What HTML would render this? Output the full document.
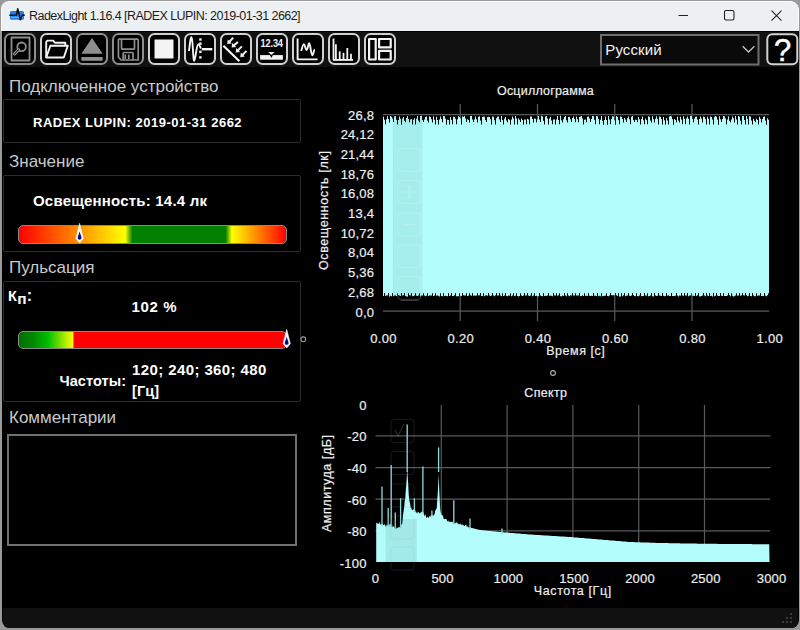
<!DOCTYPE html><html><head><meta charset="utf-8"><style>
html,body{margin:0;padding:0;width:800px;height:630px;overflow:hidden;background:#9a9a9a;}
.t{position:absolute;white-space:pre;line-height:1;font-family:"Liberation Sans",sans-serif;}
.a{position:absolute;box-sizing:border-box;}
svg{position:absolute;left:0;top:0;}
</style></head><body>

<div class="a" style="left:2px;top:1px;width:796.5px;height:627px;border-radius:8px;background:#000;overflow:hidden;"></div>
<div class="a" style="left:1px;top:1px;width:797.5px;height:30px;border-radius:8px 8px 0 0;background:#edf0f2;border-top:1px solid #fbfbfb;border-left:1px solid #fafafa;border-right:1px solid #fafafa;"></div>
<div class="a" style="left:2.5px;top:607.5px;width:795px;height:20px;border-radius:0 0 6px 6px;background:#111111;"></div>
<div class="t" style="left:29.00px;top:9.62px;font-size:12.5px;font-weight:400;color:#1c1c1c;letter-spacing:-0.55px;">RadexLight 1.16.4 [RADEX LUPIN: 2019-01-31 2662]</div>
<svg width="800" height="630" viewBox="0 0 800 630">
<rect x="10" y="10.9" width="14" height="8.8" rx="1.5" fill="#1f7ff0"/>
<path d="M11 17.3 L23 17.3" stroke="#8cc0ff" stroke-width="0.9"/>
<path d="M9.3 15.2 L16.4 15 L17.7 8.8 L20.4 19.8 L22.3 15 L24.8 15.2" fill="none" stroke="#111" stroke-width="1.5" stroke-linejoin="round"/>
<line x1="678.5" y1="15.5" x2="688" y2="15.5" stroke="#222" stroke-width="1"/>
<rect x="724.5" y="10.5" width="9.5" height="9.5" rx="1.5" fill="none" stroke="#222" stroke-width="1.1"/>
<path d="M771.5 10.7 L781.5 20.7 M781.5 10.7 L771.5 20.7" stroke="#222" stroke-width="1.1"/>
<rect x="790.25" y="613.25" width="1.5" height="1.5" fill="#5a5a5a"/>
<rect x="786.25" y="617.25" width="1.5" height="1.5" fill="#5a5a5a"/>
<rect x="790.25" y="617.25" width="1.5" height="1.5" fill="#5a5a5a"/>
<rect x="782.25" y="621.25" width="1.5" height="1.5" fill="#5a5a5a"/>
<rect x="786.25" y="621.25" width="1.5" height="1.5" fill="#5a5a5a"/>
<rect x="790.25" y="621.25" width="1.5" height="1.5" fill="#5a5a5a"/>
</svg>
<div class="a" style="left:2.5px;top:32px;width:795px;height:34.5px;background:#111111;"></div>
<svg width="800" height="630" viewBox="0 0 800 630">
<rect x="4.5" y="33.5" width="31" height="31" rx="6" fill="none" stroke="#000" stroke-width="1"/>
<rect x="5" y="34" width="30" height="30" rx="5.5" fill="#000" stroke="#8e8e8e" stroke-width="2"/>
<g transform="translate(4,33)" fill="none" stroke="#8e8e8e" stroke-width="1.8" stroke-linejoin="round"><rect x="7.5" y="4.5" width="18" height="23"/><circle cx="17.6" cy="13.8" r="4.3"/><path d="M14.6 16.8 L10.6 20.8" stroke-width="3.2" stroke-linecap="round"/><path d="M14.6 16.8 L10.6 20.8" stroke="#000" stroke-width="1" stroke-linecap="round"/></g>
<rect x="40.5" y="33.5" width="31" height="31" rx="6" fill="none" stroke="#000" stroke-width="1"/>
<rect x="41" y="34" width="30" height="30" rx="5.5" fill="#000" stroke="#cfcfcf" stroke-width="2"/>
<g transform="translate(40,33)" fill="none" stroke="#f4f4f4" stroke-width="1.8" stroke-linejoin="round"><path d="M6.2 24.5 L6.2 9 L7.4 7.6 L13.2 7.6 L14.8 9.8 L25.3 9.8 L25.3 12.8" stroke-width="1.9"/><path d="M10.4 12.8 L27.8 12.8 L23.8 24.5 L6.2 24.5 Z" stroke-width="1.9"/></g>
<rect x="76.5" y="33.5" width="31" height="31" rx="6" fill="none" stroke="#000" stroke-width="1"/>
<rect x="77" y="34" width="30" height="30" rx="5.5" fill="#000" stroke="#8e8e8e" stroke-width="2"/>
<g transform="translate(76,33)" fill="none" stroke="#8e8e8e" stroke-width="1.8" stroke-linejoin="round"><path d="M16 5 L26.6 20.8 L5.4 20.8 Z" fill="#8e8e8e" stroke="none"/><rect x="5.4" y="24" width="21.2" height="3.8" fill="#8e8e8e" stroke="none"/></g>
<rect x="112.5" y="33.5" width="31" height="31" rx="6" fill="none" stroke="#000" stroke-width="1"/>
<rect x="113" y="34" width="30" height="30" rx="5.5" fill="#000" stroke="#8e8e8e" stroke-width="2"/>
<g transform="translate(112,33)" fill="none" stroke="#8e8e8e" stroke-width="1.8" stroke-linejoin="round"><path d="M7.4 6.2 L25.2 6.2 Q26.2 6.2 26.2 7.2 L26.2 27 L9 27 L6.4 24 L6.4 7.2 Q6.4 6.2 7.4 6.2 Z" stroke-width="1.7"/><path d="M9.5 6.5 L9.5 15.2 Q9.5 16.2 10.5 16.2 L21.5 16.2 Q22.5 16.2 22.5 15.2 L22.5 6.5" stroke-width="1.7"/><path d="M11.2 27 L11.2 20.3 Q11.2 19.5 12 19.5 L20.3 19.5 Q21 19.5 21 20.3 L21 27" stroke-width="1.7"/><path d="M13.3 21.6 L13.3 26 M16.8 21.6 L16.8 26" stroke-width="1.7"/></g>
<rect x="148.5" y="33.5" width="31" height="31" rx="6" fill="none" stroke="#000" stroke-width="1"/>
<rect x="149" y="34" width="30" height="30" rx="5.5" fill="#000" stroke="#cfcfcf" stroke-width="2"/>
<g transform="translate(148,33)" fill="none" stroke="#f4f4f4" stroke-width="1.8" stroke-linejoin="round"><rect x="10.5" y="6.5" width="19" height="19" fill="#f4f4f4" stroke="none" transform="translate(-4,0)"/></g>
<rect x="184.5" y="33.5" width="31" height="31" rx="6" fill="none" stroke="#000" stroke-width="1"/>
<rect x="185" y="34" width="30" height="30" rx="5.5" fill="#000" stroke="#cfcfcf" stroke-width="2"/>
<g transform="translate(184,33)" fill="none" stroke="#f4f4f4" stroke-width="1.8" stroke-linejoin="round"><path d="M5 18 C6 10 6.6 4 7.6 4.2 C8.8 4.4 9 28 10.2 27.8 C11.4 27.6 12.6 11 14.3 11.2 C15.6 11.4 16.2 14.5 17 15.5" stroke-width="1.9"/><rect x="15.2" y="5.3" width="2.4" height="2.4" fill="#f4f4f4" stroke="none"/><rect x="15.2" y="9.4" width="2.4" height="2.4" fill="#f4f4f4" stroke="none"/><rect x="15.2" y="17.6" width="2.4" height="2.4" fill="#f4f4f4" stroke="none"/><rect x="15.2" y="23.2" width="2.4" height="2.4" fill="#f4f4f4" stroke="none"/><path d="M17.8 16.2 L28.3 16.2" stroke-width="2.4"/></g>
<rect x="220.5" y="33.5" width="31" height="31" rx="6" fill="none" stroke="#000" stroke-width="1"/>
<rect x="221" y="34" width="30" height="30" rx="5.5" fill="#000" stroke="#cfcfcf" stroke-width="2"/>
<g transform="translate(220,33)" fill="none" stroke="#f4f4f4" stroke-width="1.8" stroke-linejoin="round"><path d="M3.4 12.8 L19.4 28.3" stroke-width="2.2"/><path d="M13.2 4.6 L8.7 9.5" stroke-width="2"/><path d="M7.2 11 L11.8 10.4 L7.8 6.4 Z" fill="#f4f4f4" stroke="none"/><path d="M17.9 8.9 L13.1 13.1" stroke-width="2"/><path d="M11.6 14.6 L16.2 14.0 L12.2 10.0 Z" fill="#f4f4f4" stroke="none"/><path d="M21.9 13.4 L17.1 18.1" stroke-width="2"/><path d="M15.6 19.6 L20.2 19.0 L16.2 15.000000000000002 Z" fill="#f4f4f4" stroke="none"/><path d="M26.5 17.9 L21.7 22.7" stroke-width="2"/><path d="M20.2 24.2 L24.799999999999997 23.599999999999998 L20.8 19.6 Z" fill="#f4f4f4" stroke="none"/></g>
<rect x="256.5" y="33.5" width="31" height="31" rx="6" fill="none" stroke="#000" stroke-width="1"/>
<rect x="257" y="34" width="30" height="30" rx="5.5" fill="#000" stroke="#cfcfcf" stroke-width="2"/>
<g transform="translate(256,33)" fill="none" stroke="#f4f4f4" stroke-width="1.8" stroke-linejoin="round"><text x="15.7" y="13" font-family="Liberation Sans" font-weight="700" font-size="9.6" fill="#f4f4f4" stroke="none" text-anchor="middle" letter-spacing="-0.15" transform="translate(15.7 0) scale(0.96 1.05) translate(-15.7 0)">12.34</text><rect x="4.1" y="22.1" width="22.8" height="4.6" fill="#f4f4f4" stroke="none"/><path d="M12.2 19 L18.6 19 L15.4 22 Z" fill="#f4f4f4" stroke="none"/><path d="M13.9 22.1 L16.9 22.1 L15.4 24.9 Z" fill="#000" stroke="none"/></g>
<rect x="292.5" y="33.5" width="31" height="31" rx="6" fill="none" stroke="#000" stroke-width="1"/>
<rect x="293" y="34" width="30" height="30" rx="5.5" fill="#000" stroke="#cfcfcf" stroke-width="2"/>
<g transform="translate(292,33)" fill="none" stroke="#f4f4f4" stroke-width="1.8" stroke-linejoin="round"><path d="M5.6 5.5 L5.6 26.4 L25.6 26.4" stroke-width="1.9"/><path d="M9.2 18 C10.2 14 11 11 11.9 11.2 C13 11.4 13.4 17 14.6 17 C15.8 17 16.2 10.2 17.2 10.3 C18.4 10.4 19 22.2 20.3 22.2 C21.4 22.2 21.8 16.8 22.8 16.5" stroke-width="1.9"/></g>
<rect x="328.5" y="33.5" width="31" height="31" rx="6" fill="none" stroke="#000" stroke-width="1"/>
<rect x="329" y="34" width="30" height="30" rx="5.5" fill="#000" stroke="#cfcfcf" stroke-width="2"/>
<g transform="translate(328,33)" fill="none" stroke="#f4f4f4" stroke-width="1.8" stroke-linejoin="round"><path d="M5 26.9 L25 26.9" stroke-width="1.9"/><path d="M5.5 5.5 L5.5 26.9" stroke-width="1.8"/><path d="M7.9 11.2 L7.9 26.9" stroke-width="1.8"/><path d="M11.7 18.4 L11.7 26.9" stroke-width="1.8"/><path d="M15.5 19.8 L15.5 26.9" stroke-width="1.8"/><path d="M19.3 15 L19.3 26.9" stroke-width="1.8"/><path d="M23 20.7 L23 26.9" stroke-width="1.8"/></g>
<rect x="364.5" y="33.5" width="31" height="31" rx="6" fill="none" stroke="#000" stroke-width="1"/>
<rect x="365" y="34" width="30" height="30" rx="5.5" fill="#000" stroke="#cfcfcf" stroke-width="2"/>
<g transform="translate(364,33)" fill="none" stroke="#f4f4f4" stroke-width="1.8" stroke-linejoin="round"><rect x="5.1" y="6" width="6.6" height="20.5" stroke-width="2.2"/><rect x="15.1" y="6" width="11.6" height="8.4" stroke-width="2.2"/><rect x="15.1" y="17.9" width="11.6" height="8.6" stroke-width="2.2"/></g>
<rect x="601" y="35" width="157.5" height="29.5" fill="#0a0a0a" stroke="#6e6e6e" stroke-width="2"/>
<path d="M742.7 46.3 L748.5 52 L754.4 46.3" fill="none" stroke="#c4c4c4" stroke-width="1.3"/>
<rect x="767.3" y="34.3" width="30" height="30" rx="5" fill="#000" stroke="#d2d2d2" stroke-width="2"/>
</svg>
<div class="t" style="left:605.30px;top:42.30px;font-size:15px;font-weight:400;color:#f2f2f2;letter-spacing:0.1px;">Русский</div>
<div class="t" style="left:482.50px;width:600px;text-align:center;top:34.76px;font-size:31px;font-weight:400;color:#ffffff;letter-spacing:0px;-webkit-text-stroke:0.5px #fff;">?</div>
<div class="t" style="left:9.00px;top:77.61px;font-size:17px;font-weight:400;color:#c9c9c9;letter-spacing:0px;">Подключенное устройство</div>
<div class="t" style="left:9.00px;top:153.11px;font-size:17px;font-weight:400;color:#c9c9c9;letter-spacing:0px;">Значение</div>
<div class="t" style="left:9.00px;top:258.61px;font-size:17px;font-weight:400;color:#c9c9c9;letter-spacing:0px;">Пульсация</div>
<div class="t" style="left:9.00px;top:408.61px;font-size:17px;font-weight:400;color:#c9c9c9;letter-spacing:0px;">Комментарии</div>
<div class="a" style="left:3px;top:99px;width:298px;height:44px;border:1px solid #2c2c2c;border-radius:2px;"></div>
<div class="a" style="left:3px;top:175px;width:298px;height:77px;border:1px solid #2c2c2c;border-radius:2px;"></div>
<div class="a" style="left:3px;top:281px;width:298px;height:121px;border:1px solid #2c2c2c;border-radius:2px;"></div>
<div class="a" style="left:7px;top:433.5px;width:290px;height:112px;border:2px solid #707070;"></div>
<div class="t" style="left:33.00px;top:115.80px;font-size:13px;font-weight:700;color:#fff;letter-spacing:0.5px;">RADEX LUPIN: 2019-01-31 2662</div>
<div class="t" style="left:33.00px;top:193.10px;font-size:15px;font-weight:700;color:#fff;letter-spacing:0.2px;">Освещенность: 14.4 лк</div>
<div class="t" style="left:8.00px;top:287.73px;font-size:14.5px;font-weight:700;color:#fff;letter-spacing:0.3px;">К<span style="font-size:15.5px;position:relative;top:3.5px;">п</span><span style="font-size:16px;">:</span></div>
<div class="t" style="left:131.60px;top:298.80px;font-size:15px;font-weight:700;color:#fff;letter-spacing:0.6px;">102 %</div>
<div class="t" style="left:132.00px;top:362.00px;font-size:15px;font-weight:700;color:#fff;letter-spacing:0.4px;">120; 240; 360; 480</div>
<div class="t" style="left:132.00px;top:383.73px;font-size:14.5px;font-weight:700;color:#fff;letter-spacing:0.1px;">[Гц]</div>
<div class="t" style="left:59.40px;top:374.33px;font-size:14.5px;font-weight:700;color:#fff;letter-spacing:0.1px;">Частоты:</div>
<div class="a" style="left:17.5px;top:224.5px;width:269px;height:19px;border:1.5px solid #8a8a8a;border-radius:5px;background:linear-gradient(90deg,#ff0000 0%,#ffff00 39.8%,#008000 42.5%,#008000 77.4%,#ffff00 79.7%,#ff0000 100%);"></div>
<div class="a" style="left:17.5px;top:330.5px;width:269px;height:18px;border:1.5px solid #8a8a8a;border-radius:5px;background:linear-gradient(90deg,#006e00 0%,#008800 5.3%,#00c000 10.9%,#ffff00 20.3%,#ff0000 20.5%,#ff0000 100%);"></div>
<svg width="800" height="630" viewBox="0 0 800 630">
<path d="M79.6 223.3 L83.3 238.47 L79.6 243 L75.89999999999999 238.47 Z" fill="#ffffff" stroke="#ffffff" stroke-width="0.5" stroke-linejoin="round"/>
<path d="M79.6 231.18 C80.1 233.72 81.5 236.26 81.5 237.96 C81.5 239.35 80.39999999999999 239.65 79.6 239.65 C78.8 239.65 77.69999999999999 239.35 77.69999999999999 237.96 C77.69999999999999 236.26 79.1 233.72 79.6 231.18 Z" fill="#0a0a80"/>
<path d="M286.7 329.3 L290.4 343.70 L286.7 348 L283.0 343.70 Z" fill="#ffffff" stroke="#ffffff" stroke-width="0.5" stroke-linejoin="round"/>
<path d="M286.7 336.78 C287.2 339.19 288.59999999999997 341.60 288.59999999999997 343.21 C288.59999999999997 344.52 287.5 344.82 286.7 344.82 C285.9 344.82 284.8 344.52 284.8 343.21 C284.8 341.60 286.2 339.19 286.7 336.78 Z" fill="#0a0a80"/>
<circle cx="303.3" cy="339.3" r="2.4" fill="none" stroke="#9a9a9a" stroke-width="1.1"/>
<circle cx="553" cy="373" r="2.4" fill="none" stroke="#b0b0b0" stroke-width="1.1"/>
<line x1="460.24" y1="104" x2="460.24" y2="321" stroke="#5a5a5a" stroke-width="1.2"/>
<line x1="537.48" y1="104" x2="537.48" y2="321" stroke="#5a5a5a" stroke-width="1.2"/>
<line x1="614.72" y1="104" x2="614.72" y2="321" stroke="#5a5a5a" stroke-width="1.2"/>
<line x1="691.96" y1="104" x2="691.96" y2="321" stroke="#5a5a5a" stroke-width="1.2"/>
<line x1="383.0" y1="311.2" x2="769.2" y2="311.2" stroke="#5a5a5a" stroke-width="1.2"/>
<line x1="383.0" y1="114.6" x2="769.2" y2="114.6" stroke="#5a5a5a" stroke-width="1.2"/>
<path d="M383.0 116.8 L384.0 116.8 L384.0 119.7 L385.0 119.7 L385.0 124.3 L386.0 124.3 L386.0 119.3 L387.0 119.3 L387.0 116.3 L388.0 116.3 L388.0 119.0 L389.0 119.0 L389.0 122.4 L390.0 122.4 L390.0 116.1 L391.0 116.1 L391.0 116.8 L392.0 116.8 L392.0 118.6 L393.0 118.6 L393.0 122.1 L394.0 122.1 L394.0 116.2 L395.0 116.2 L395.0 115.9 L396.0 115.9 L396.0 119.8 L397.0 119.8 L397.0 124.5 L398.0 124.5 L398.0 119.9 L399.0 119.9 L399.0 116.5 L400.0 116.5 L400.0 118.8 L401.0 118.8 L401.0 124.7 L402.0 124.7 L402.0 118.4 L403.0 118.4 L403.0 116.9 L404.0 116.9 L404.0 120.7 L405.0 120.7 L405.0 122.3 L406.0 122.3 L406.0 118.1 L407.0 118.1 L407.0 116.1 L408.0 116.1 L408.0 118.9 L409.0 118.9 L409.0 122.3 L410.0 122.3 L410.0 119.4 L411.0 119.4 L411.0 118.9 L412.0 118.9 L412.0 124.6 L413.0 124.6 L413.0 119.8 L414.0 119.8 L414.0 118.3 L415.0 118.3 L415.0 124.4 L416.0 124.4 L416.0 118.7 L417.0 118.7 L417.0 116.0 L418.0 116.0 L418.0 120.5 L419.0 120.5 L419.0 122.3 L420.0 122.3 L420.0 116.0 L421.0 116.0 L421.0 115.8 L422.0 115.8 L422.0 120.1 L423.0 120.1 L423.0 122.0 L424.0 122.0 L424.0 119.5 L425.0 119.5 L425.0 117.0 L426.0 117.0 L426.0 116.5 L427.0 116.5 L427.0 120.6 L428.0 120.6 L428.0 122.4 L429.0 122.4 L429.0 116.2 L430.0 116.2 L430.0 116.9 L431.0 116.9 L431.0 119.3 L432.0 119.3 L432.0 122.4 L433.0 122.4 L433.0 116.3 L434.0 116.3 L434.0 119.8 L435.0 119.8 L435.0 124.5 L436.0 124.5 L436.0 116.7 L437.0 116.7 L437.0 120.1 L438.0 120.1 L438.0 124.4 L439.0 124.4 L439.0 119.5 L440.0 119.5 L440.0 116.5 L441.0 116.5 L441.0 118.9 L442.0 118.9 L442.0 122.2 L443.0 122.2 L443.0 116.1 L444.0 116.1 L444.0 116.2 L445.0 116.2 L445.0 118.8 L446.0 118.8 L446.0 124.7 L447.0 124.7 L447.0 119.8 L448.0 119.8 L448.0 120.0 L449.0 120.0 L449.0 124.4 L450.0 124.4 L450.0 116.9 L451.0 116.9 L451.0 119.8 L452.0 119.8 L452.0 124.3 L453.0 124.3 L453.0 116.8 L454.0 116.8 L454.0 116.9 L455.0 116.9 L455.0 118.7 L456.0 118.7 L456.0 124.3 L457.0 124.3 L457.0 119.3 L458.0 119.3 L458.0 116.2 L459.0 116.2 L459.0 117.0 L460.0 117.0 L460.0 118.5 L461.0 118.5 L461.0 124.6 L462.0 124.6 L462.0 116.5 L463.0 116.5 L463.0 116.7 L464.0 116.7 L464.0 116.0 L465.0 116.0 L465.0 118.4 L466.0 118.4 L466.0 122.1 L467.0 122.1 L467.0 119.3 L468.0 119.3 L468.0 119.9 L469.0 119.9 L469.0 122.4 L470.0 122.4 L470.0 116.0 L471.0 116.0 L471.0 116.0 L472.0 116.0 L472.0 119.5 L473.0 119.5 L473.0 122.1 L474.0 122.1 L474.0 119.4 L475.0 119.4 L475.0 116.5 L476.0 116.5 L476.0 119.3 L477.0 119.3 L477.0 122.5 L478.0 122.5 L478.0 116.7 L479.0 116.7 L479.0 116.3 L480.0 116.3 L480.0 120.6 L481.0 120.6 L481.0 124.5 L482.0 124.5 L482.0 116.9 L483.0 116.9 L483.0 116.6 L484.0 116.6 L484.0 116.7 L485.0 116.7 L485.0 119.9 L486.0 119.9 L486.0 122.1 L487.0 122.1 L487.0 117.0 L488.0 117.0 L488.0 116.7 L489.0 116.7 L489.0 116.9 L490.0 116.9 L490.0 119.2 L491.0 119.2 L491.0 124.4 L492.0 124.4 L492.0 116.4 L493.0 116.4 L493.0 116.8 L494.0 116.8 L494.0 120.3 L495.0 120.3 L495.0 124.4 L496.0 124.4 L496.0 118.3 L497.0 118.3 L497.0 116.7 L498.0 116.7 L498.0 116.6 L499.0 116.6 L499.0 119.5 L500.0 119.5 L500.0 122.0 L501.0 122.0 L501.0 116.1 L502.0 116.1 L502.0 119.9 L503.0 119.9 L503.0 124.6 L504.0 124.6 L504.0 118.8 L505.0 118.8 L505.0 116.9 L506.0 116.9 L506.0 120.4 L507.0 120.4 L507.0 122.3 L508.0 122.3 L508.0 119.1 L509.0 119.1 L509.0 119.8 L510.0 119.8 L510.0 124.7 L511.0 124.7 L511.0 119.6 L512.0 119.6 L512.0 116.4 L513.0 116.4 L513.0 118.5 L514.0 118.5 L514.0 124.4 L515.0 124.4 L515.0 116.1 L516.0 116.1 L516.0 118.6 L517.0 118.6 L517.0 124.6 L518.0 124.6 L518.0 118.6 L519.0 118.6 L519.0 119.8 L520.0 119.8 L520.0 122.1 L521.0 122.1 L521.0 118.4 L522.0 118.4 L522.0 120.0 L523.0 120.0 L523.0 124.4 L524.0 124.4 L524.0 119.5 L525.0 119.5 L525.0 119.6 L526.0 119.6 L526.0 124.3 L527.0 124.3 L527.0 118.8 L528.0 118.8 L528.0 119.6 L529.0 119.6 L529.0 124.3 L530.0 124.3 L530.0 116.4 L531.0 116.4 L531.0 116.5 L532.0 116.5 L532.0 118.9 L533.0 118.9 L533.0 122.4 L534.0 122.4 L534.0 118.6 L535.0 118.6 L535.0 118.8 L536.0 118.8 L536.0 122.4 L537.0 122.4 L537.0 119.5 L538.0 119.5 L538.0 115.9 L539.0 115.9 L539.0 119.4 L540.0 119.4 L540.0 122.1 L541.0 122.1 L541.0 115.8 L542.0 115.8 L542.0 116.6 L543.0 116.6 L543.0 120.7 L544.0 120.7 L544.0 124.5 L545.0 124.5 L545.0 116.6 L546.0 116.6 L546.0 115.9 L547.0 115.9 L547.0 118.4 L548.0 118.4 L548.0 124.5 L549.0 124.5 L549.0 118.4 L550.0 118.4 L550.0 116.8 L551.0 116.8 L551.0 120.6 L552.0 120.6 L552.0 124.2 L553.0 124.2 L553.0 119.5 L554.0 119.5 L554.0 119.5 L555.0 119.5 L555.0 124.4 L556.0 124.4 L556.0 119.4 L557.0 119.4 L557.0 116.0 L558.0 116.0 L558.0 120.1 L559.0 120.1 L559.0 124.3 L560.0 124.3 L560.0 115.8 L561.0 115.8 L561.0 120.3 L562.0 120.3 L562.0 122.4 L563.0 122.4 L563.0 119.2 L564.0 119.2 L564.0 117.0 L565.0 117.0 L565.0 116.1 L566.0 116.1 L566.0 120.2 L567.0 120.2 L567.0 122.4 L568.0 122.4 L568.0 116.9 L569.0 116.9 L569.0 116.7 L570.0 116.7 L570.0 119.3 L571.0 119.3 L571.0 122.0 L572.0 122.0 L572.0 118.0 L573.0 118.0 L573.0 116.6 L574.0 116.6 L574.0 118.9 L575.0 118.9 L575.0 122.3 L576.0 122.3 L576.0 116.5 L577.0 116.5 L577.0 119.3 L578.0 119.3 L578.0 122.3 L579.0 122.3 L579.0 117.0 L580.0 117.0 L580.0 116.5 L581.0 116.5 L581.0 116.1 L582.0 116.1 L582.0 118.4 L583.0 118.4 L583.0 124.4 L584.0 124.4 L584.0 119.8 L585.0 119.8 L585.0 119.6 L586.0 119.6 L586.0 122.3 L587.0 122.3 L587.0 116.8 L588.0 116.8 L588.0 116.5 L589.0 116.5 L589.0 118.4 L590.0 118.4 L590.0 122.1 L591.0 122.1 L591.0 119.0 L592.0 119.0 L592.0 115.9 L593.0 115.9 L593.0 116.3 L594.0 116.3 L594.0 119.8 L595.0 119.8 L595.0 124.3 L596.0 124.3 L596.0 116.1 L597.0 116.1 L597.0 116.2 L598.0 116.2 L598.0 118.9 L599.0 118.9 L599.0 124.3 L600.0 124.3 L600.0 119.8 L601.0 119.8 L601.0 115.9 L602.0 115.9 L602.0 120.7 L603.0 120.7 L603.0 124.7 L604.0 124.7 L604.0 119.9 L605.0 119.9 L605.0 116.4 L606.0 116.4 L606.0 120.1 L607.0 120.1 L607.0 124.7 L608.0 124.7 L608.0 115.9 L609.0 115.9 L609.0 119.4 L610.0 119.4 L610.0 124.2 L611.0 124.2 L611.0 118.9 L612.0 118.9 L612.0 116.3 L613.0 116.3 L613.0 116.5 L614.0 116.5 L614.0 120.2 L615.0 120.2 L615.0 124.7 L616.0 124.7 L616.0 116.1 L617.0 116.1 L617.0 116.9 L618.0 116.9 L618.0 119.9 L619.0 119.9 L619.0 124.3 L620.0 124.3 L620.0 116.5 L621.0 116.5 L621.0 116.7 L622.0 116.7 L622.0 118.9 L623.0 118.9 L623.0 122.5 L624.0 122.5 L624.0 118.1 L625.0 118.1 L625.0 119.4 L626.0 119.4 L626.0 122.1 L627.0 122.1 L627.0 118.2 L628.0 118.2 L628.0 116.5 L629.0 116.5 L629.0 119.2 L630.0 119.2 L630.0 124.3 L631.0 124.3 L631.0 116.8 L632.0 116.8 L632.0 115.9 L633.0 115.9 L633.0 119.9 L634.0 119.9 L634.0 122.1 L635.0 122.1 L635.0 119.6 L636.0 119.6 L636.0 119.9 L637.0 119.9 L637.0 122.2 L638.0 122.2 L638.0 116.9 L639.0 116.9 L639.0 119.2 L640.0 119.2 L640.0 124.6 L641.0 124.6 L641.0 119.1 L642.0 119.1 L642.0 116.6 L643.0 116.6 L643.0 120.2 L644.0 120.2 L644.0 124.3 L645.0 124.3 L645.0 118.6 L646.0 118.6 L646.0 120.0 L647.0 120.0 L647.0 124.3 L648.0 124.3 L648.0 116.2 L649.0 116.2 L649.0 116.7 L650.0 116.7 L650.0 120.6 L651.0 120.6 L651.0 122.5 L652.0 122.5 L652.0 116.2 L653.0 116.2 L653.0 119.3 L654.0 119.3 L654.0 122.4 L655.0 122.4 L655.0 118.7 L656.0 118.7 L656.0 116.3 L657.0 116.3 L657.0 118.8 L658.0 118.8 L658.0 124.6 L659.0 124.6 L659.0 116.5 L660.0 116.5 L660.0 116.7 L661.0 116.7 L661.0 119.0 L662.0 119.0 L662.0 124.5 L663.0 124.5 L663.0 117.0 L664.0 117.0 L664.0 120.3 L665.0 120.3 L665.0 124.5 L666.0 124.5 L666.0 118.2 L667.0 118.2 L667.0 120.5 L668.0 120.5 L668.0 124.5 L669.0 124.5 L669.0 116.6 L670.0 116.6 L670.0 116.1 L671.0 116.1 L671.0 116.4 L672.0 116.4 L672.0 119.3 L673.0 119.3 L673.0 124.7 L674.0 124.7 L674.0 119.1 L675.0 119.1 L675.0 120.1 L676.0 120.1 L676.0 122.2 L677.0 122.2 L677.0 116.8 L678.0 116.8 L678.0 120.4 L679.0 120.4 L679.0 122.5 L680.0 122.5 L680.0 116.7 L681.0 116.7 L681.0 119.4 L682.0 119.4 L682.0 124.3 L683.0 124.3 L683.0 116.3 L684.0 116.3 L684.0 118.8 L685.0 118.8 L685.0 124.3 L686.0 124.3 L686.0 118.6 L687.0 118.6 L687.0 116.6 L688.0 116.6 L688.0 118.7 L689.0 118.7 L689.0 124.4 L690.0 124.4 L690.0 115.8 L691.0 115.8 L691.0 116.0 L692.0 116.0 L692.0 118.9 L693.0 118.9 L693.0 122.3 L694.0 122.3 L694.0 118.6 L695.0 118.6 L695.0 116.7 L696.0 116.7 L696.0 116.5 L697.0 116.5 L697.0 119.5 L698.0 119.5 L698.0 124.6 L699.0 124.6 L699.0 119.1 L700.0 119.1 L700.0 116.4 L701.0 116.4 L701.0 118.4 L702.0 118.4 L702.0 122.4 L703.0 122.4 L703.0 116.4 L704.0 116.4 L704.0 117.0 L705.0 117.0 L705.0 118.9 L706.0 118.9 L706.0 124.4 L707.0 124.4 L707.0 116.7 L708.0 116.7 L708.0 118.7 L709.0 118.7 L709.0 124.4 L710.0 124.4 L710.0 116.4 L711.0 116.4 L711.0 117.0 L712.0 117.0 L712.0 119.6 L713.0 119.6 L713.0 124.6 L714.0 124.6 L714.0 116.8 L715.0 116.8 L715.0 115.9 L716.0 115.9 L716.0 116.7 L717.0 116.7 L717.0 119.5 L718.0 119.5 L718.0 124.7 L719.0 124.7 L719.0 116.2 L720.0 116.2 L720.0 119.3 L721.0 119.3 L721.0 122.0 L722.0 122.0 L722.0 119.1 L723.0 119.1 L723.0 116.0 L724.0 116.0 L724.0 116.2 L725.0 116.2 L725.0 118.5 L726.0 118.5 L726.0 124.4 L727.0 124.4 L727.0 119.4 L728.0 119.4 L728.0 116.3 L729.0 116.3 L729.0 120.7 L730.0 120.7 L730.0 122.3 L731.0 122.3 L731.0 119.4 L732.0 119.4 L732.0 116.5 L733.0 116.5 L733.0 118.3 L734.0 118.3 L734.0 122.4 L735.0 122.4 L735.0 116.1 L736.0 116.1 L736.0 119.6 L737.0 119.6 L737.0 124.4 L738.0 124.4 L738.0 116.1 L739.0 116.1 L739.0 116.7 L740.0 116.7 L740.0 120.7 L741.0 120.7 L741.0 124.6 L742.0 124.6 L742.0 115.9 L743.0 115.9 L743.0 115.9 L744.0 115.9 L744.0 120.1 L745.0 120.1 L745.0 124.4 L746.0 124.4 L746.0 115.9 L747.0 115.9 L747.0 118.7 L748.0 118.7 L748.0 124.4 L749.0 124.4 L749.0 116.3 L750.0 116.3 L750.0 116.6 L751.0 116.6 L751.0 120.4 L752.0 120.4 L752.0 124.4 L753.0 124.4 L753.0 118.8 L754.0 118.8 L754.0 120.8 L755.0 120.8 L755.0 122.3 L756.0 122.3 L756.0 118.7 L757.0 118.7 L757.0 119.9 L758.0 119.9 L758.0 124.4 L759.0 124.4 L759.0 116.8 L760.0 116.8 L760.0 118.7 L761.0 118.7 L761.0 122.5 L762.0 122.5 L762.0 119.0 L763.0 119.0 L763.0 116.7 L764.0 116.7 L764.0 116.4 L765.0 116.4 L765.0 120.4 L766.0 120.4 L766.0 124.7 L767.0 124.7 L767.0 118.2 L768.0 118.2 L768.0 119.7 L769.0 119.7 L769.0 293.2 L768.0 293.2 L768.0 295.3 L767.0 295.3 L767.0 296.3 L766.0 296.3 L766.0 295.8 L765.0 295.8 L765.0 293.1 L764.0 293.1 L764.0 296.1 L763.0 296.1 L763.0 295.9 L762.0 295.9 L762.0 296.1 L761.0 296.1 L761.0 293.3 L760.0 293.3 L760.0 295.4 L759.0 295.4 L759.0 295.6 L758.0 295.6 L758.0 295.8 L757.0 295.8 L757.0 293.3 L756.0 293.3 L756.0 296.3 L755.0 296.3 L755.0 296.2 L754.0 296.2 L754.0 295.5 L753.0 295.5 L753.0 293.0 L752.0 293.0 L752.0 296.3 L751.0 296.3 L751.0 295.9 L750.0 295.9 L750.0 293.1 L749.0 293.1 L749.0 295.7 L748.0 295.7 L748.0 296.2 L747.0 296.2 L747.0 295.3 L746.0 295.3 L746.0 293.0 L745.0 293.0 L745.0 295.6 L744.0 295.6 L744.0 295.3 L743.0 295.3 L743.0 293.0 L742.0 293.0 L742.0 295.3 L741.0 295.3 L741.0 295.7 L740.0 295.7 L740.0 293.1 L739.0 293.1 L739.0 295.6 L738.0 295.6 L738.0 295.7 L737.0 295.7 L737.0 293.3 L736.0 293.3 L736.0 295.4 L735.0 295.4 L735.0 296.3 L734.0 296.3 L734.0 296.4 L733.0 296.4 L733.0 295.7 L732.0 295.7 L732.0 293.2 L731.0 293.2 L731.0 296.3 L730.0 296.3 L730.0 295.2 L729.0 295.2 L729.0 293.1 L728.0 293.1 L728.0 295.6 L727.0 295.6 L727.0 296.1 L726.0 296.1 L726.0 295.9 L725.0 295.9 L725.0 296.0 L724.0 296.0 L724.0 293.2 L723.0 293.2 L723.0 296.1 L722.0 296.1 L722.0 295.8 L721.0 295.8 L721.0 293.1 L720.0 293.1 L720.0 296.1 L719.0 296.1 L719.0 296.1 L718.0 296.1 L718.0 295.6 L717.0 295.6 L717.0 293.1 L716.0 293.1 L716.0 295.7 L715.0 295.7 L715.0 296.3 L714.0 296.3 L714.0 293.1 L713.0 293.1 L713.0 296.4 L712.0 296.4 L712.0 295.8 L711.0 295.8 L711.0 295.9 L710.0 295.9 L710.0 293.2 L709.0 293.2 L709.0 296.0 L708.0 296.0 L708.0 295.4 L707.0 295.4 L707.0 293.1 L706.0 293.1 L706.0 296.2 L705.0 296.2 L705.0 295.5 L704.0 295.5 L704.0 293.1 L703.0 293.1 L703.0 295.4 L702.0 295.4 L702.0 296.0 L701.0 296.0 L701.0 296.4 L700.0 296.4 L700.0 296.2 L699.0 296.2 L699.0 293.1 L698.0 293.1 L698.0 295.3 L697.0 295.3 L697.0 296.0 L696.0 296.0 L696.0 293.0 L695.0 293.0 L695.0 296.0 L694.0 296.0 L694.0 295.8 L693.0 295.8 L693.0 295.7 L692.0 295.7 L692.0 293.2 L691.0 293.2 L691.0 295.6 L690.0 295.6 L690.0 295.6 L689.0 295.6 L689.0 296.3 L688.0 296.3 L688.0 293.1 L687.0 293.1 L687.0 295.6 L686.0 295.6 L686.0 295.6 L685.0 295.6 L685.0 293.1 L684.0 293.1 L684.0 295.7 L683.0 295.7 L683.0 295.4 L682.0 295.4 L682.0 293.1 L681.0 293.1 L681.0 295.8 L680.0 295.8 L680.0 295.6 L679.0 295.6 L679.0 296.4 L678.0 296.4 L678.0 295.6 L677.0 295.6 L677.0 293.1 L676.0 293.1 L676.0 295.7 L675.0 295.7 L675.0 295.9 L674.0 295.9 L674.0 295.9 L673.0 295.9 L673.0 295.9 L672.0 295.9 L672.0 293.1 L671.0 293.1 L671.0 296.0 L670.0 296.0 L670.0 296.1 L669.0 296.1 L669.0 295.3 L668.0 295.3 L668.0 295.7 L667.0 295.7 L667.0 293.1 L666.0 293.1 L666.0 296.1 L665.0 296.1 L665.0 296.3 L664.0 296.3 L664.0 295.8 L663.0 295.8 L663.0 293.0 L662.0 293.0 L662.0 295.9 L661.0 295.9 L661.0 295.7 L660.0 295.7 L660.0 295.5 L659.0 295.5 L659.0 293.1 L658.0 293.1 L658.0 295.8 L657.0 295.8 L657.0 295.9 L656.0 295.9 L656.0 295.4 L655.0 295.4 L655.0 293.1 L654.0 293.1 L654.0 296.4 L653.0 296.4 L653.0 296.2 L652.0 296.2 L652.0 293.1 L651.0 293.1 L651.0 295.6 L650.0 295.6 L650.0 296.1 L649.0 296.1 L649.0 296.2 L648.0 296.2 L648.0 293.2 L647.0 293.2 L647.0 295.8 L646.0 295.8 L646.0 295.5 L645.0 295.5 L645.0 293.0 L644.0 293.0 L644.0 296.0 L643.0 296.0 L643.0 295.9 L642.0 295.9 L642.0 296.3 L641.0 296.3 L641.0 293.1 L640.0 293.1 L640.0 295.6 L639.0 295.6 L639.0 296.3 L638.0 296.3 L638.0 296.1 L637.0 296.1 L637.0 293.3 L636.0 293.3 L636.0 296.3 L635.0 296.3 L635.0 295.9 L634.0 295.9 L634.0 295.3 L633.0 295.3 L633.0 293.1 L632.0 293.1 L632.0 295.6 L631.0 295.6 L631.0 295.9 L630.0 295.9 L630.0 295.7 L629.0 295.7 L629.0 293.2 L628.0 293.2 L628.0 295.4 L627.0 295.4 L627.0 295.8 L626.0 295.8 L626.0 296.3 L625.0 296.3 L625.0 293.1 L624.0 293.1 L624.0 295.2 L623.0 295.2 L623.0 296.3 L622.0 296.3 L622.0 293.2 L621.0 293.2 L621.0 296.4 L620.0 296.4 L620.0 296.4 L619.0 296.4 L619.0 293.2 L618.0 293.2 L618.0 296.0 L617.0 296.0 L617.0 295.3 L616.0 295.3 L616.0 293.1 L615.0 293.1 L615.0 295.2 L614.0 295.2 L614.0 295.3 L613.0 295.3 L613.0 295.3 L612.0 295.3 L612.0 295.3 L611.0 295.3 L611.0 293.0 L610.0 293.0 L610.0 295.4 L609.0 295.4 L609.0 296.2 L608.0 296.2 L608.0 296.1 L607.0 296.1 L607.0 293.2 L606.0 293.2 L606.0 295.7 L605.0 295.7 L605.0 295.7 L604.0 295.7 L604.0 296.0 L603.0 296.0 L603.0 296.3 L602.0 296.3 L602.0 293.2 L601.0 293.2 L601.0 296.2 L600.0 296.2 L600.0 295.8 L599.0 295.8 L599.0 296.3 L598.0 296.3 L598.0 293.1 L597.0 293.1 L597.0 296.1 L596.0 296.1 L596.0 295.8 L595.0 295.8 L595.0 295.7 L594.0 295.7 L594.0 293.1 L593.0 293.1 L593.0 296.0 L592.0 296.0 L592.0 295.8 L591.0 295.8 L591.0 296.0 L590.0 296.0 L590.0 295.8 L589.0 295.8 L589.0 293.2 L588.0 293.2 L588.0 296.0 L587.0 296.0 L587.0 295.8 L586.0 295.8 L586.0 295.7 L585.0 295.7 L585.0 293.2 L584.0 293.2 L584.0 296.0 L583.0 296.0 L583.0 295.3 L582.0 295.3 L582.0 295.9 L581.0 295.9 L581.0 296.2 L580.0 296.2 L580.0 293.1 L579.0 293.1 L579.0 295.4 L578.0 295.4 L578.0 295.4 L577.0 295.4 L577.0 295.6 L576.0 295.6 L576.0 293.2 L575.0 293.2 L575.0 295.4 L574.0 295.4 L574.0 295.4 L573.0 295.4 L573.0 293.0 L572.0 293.0 L572.0 295.6 L571.0 295.6 L571.0 295.2 L570.0 295.2 L570.0 296.3 L569.0 296.3 L569.0 295.5 L568.0 295.5 L568.0 293.2 L567.0 293.2 L567.0 296.2 L566.0 296.2 L566.0 295.4 L565.0 295.4 L565.0 293.1 L564.0 293.1 L564.0 296.1 L563.0 296.1 L563.0 295.6 L562.0 295.6 L562.0 296.2 L561.0 296.2 L561.0 296.2 L560.0 296.2 L560.0 293.3 L559.0 293.3 L559.0 295.3 L558.0 295.3 L558.0 295.8 L557.0 295.8 L557.0 293.3 L556.0 293.3 L556.0 295.5 L555.0 295.5 L555.0 295.4 L554.0 295.4 L554.0 293.1 L553.0 293.1 L553.0 296.2 L552.0 296.2 L552.0 295.7 L551.0 295.7 L551.0 295.7 L550.0 295.7 L550.0 295.7 L549.0 295.7 L549.0 293.1 L548.0 293.1 L548.0 295.5 L547.0 295.5 L547.0 295.9 L546.0 295.9 L546.0 295.7 L545.0 295.7 L545.0 296.1 L544.0 296.1 L544.0 293.2 L543.0 293.2 L543.0 296.2 L542.0 296.2 L542.0 296.0 L541.0 296.0 L541.0 295.4 L540.0 295.4 L540.0 293.1 L539.0 293.1 L539.0 296.3 L538.0 296.3 L538.0 296.2 L537.0 296.2 L537.0 295.7 L536.0 295.7 L536.0 295.9 L535.0 295.9 L535.0 293.3 L534.0 293.3 L534.0 295.5 L533.0 295.5 L533.0 296.2 L532.0 296.2 L532.0 293.0 L531.0 293.0 L531.0 295.5 L530.0 295.5 L530.0 295.9 L529.0 295.9 L529.0 295.5 L528.0 295.5 L528.0 293.0 L527.0 293.0 L527.0 295.6 L526.0 295.6 L526.0 295.6 L525.0 295.6 L525.0 293.1 L524.0 293.1 L524.0 295.6 L523.0 295.6 L523.0 296.1 L522.0 296.1 L522.0 295.6 L521.0 295.6 L521.0 293.2 L520.0 293.2 L520.0 295.9 L519.0 295.9 L519.0 296.4 L518.0 296.4 L518.0 296.0 L517.0 296.0 L517.0 293.2 L516.0 293.2 L516.0 295.7 L515.0 295.7 L515.0 296.1 L514.0 296.1 L514.0 293.2 L513.0 293.2 L513.0 295.5 L512.0 295.5 L512.0 296.2 L511.0 296.2 L511.0 293.3 L510.0 293.3 L510.0 295.8 L509.0 295.8 L509.0 295.5 L508.0 295.5 L508.0 296.2 L507.0 296.2 L507.0 295.9 L506.0 295.9 L506.0 293.1 L505.0 293.1 L505.0 295.4 L504.0 295.4 L504.0 296.0 L503.0 296.0 L503.0 293.2 L502.0 293.2 L502.0 296.3 L501.0 296.3 L501.0 295.5 L500.0 295.5 L500.0 293.1 L499.0 293.1 L499.0 295.4 L498.0 295.4 L498.0 295.5 L497.0 295.5 L497.0 293.1 L496.0 293.1 L496.0 295.2 L495.0 295.2 L495.0 296.3 L494.0 296.3 L494.0 295.6 L493.0 295.6 L493.0 293.1 L492.0 293.1 L492.0 295.6 L491.0 295.6 L491.0 296.0 L490.0 296.0 L490.0 295.4 L489.0 295.4 L489.0 293.1 L488.0 293.1 L488.0 295.8 L487.0 295.8 L487.0 295.2 L486.0 295.2 L486.0 295.6 L485.0 295.6 L485.0 296.3 L484.0 296.3 L484.0 293.2 L483.0 293.2 L483.0 296.1 L482.0 296.1 L482.0 296.0 L481.0 296.0 L481.0 293.1 L480.0 293.1 L480.0 295.3 L479.0 295.3 L479.0 295.4 L478.0 295.4 L478.0 293.2 L477.0 293.2 L477.0 295.6 L476.0 295.6 L476.0 295.7 L475.0 295.7 L475.0 295.5 L474.0 295.5 L474.0 295.7 L473.0 295.7 L473.0 293.2 L472.0 293.2 L472.0 295.8 L471.0 295.8 L471.0 295.3 L470.0 295.3 L470.0 293.2 L469.0 293.2 L469.0 295.8 L468.0 295.8 L468.0 296.0 L467.0 296.0 L467.0 293.3 L466.0 293.3 L466.0 295.6 L465.0 295.6 L465.0 295.6 L464.0 295.6 L464.0 295.3 L463.0 295.3 L463.0 293.1 L462.0 293.1 L462.0 296.1 L461.0 296.1 L461.0 295.8 L460.0 295.8 L460.0 293.3 L459.0 293.3 L459.0 296.3 L458.0 296.3 L458.0 296.2 L457.0 296.2 L457.0 296.3 L456.0 296.3 L456.0 293.2 L455.0 293.2 L455.0 295.2 L454.0 295.2 L454.0 295.9 L453.0 295.9 L453.0 296.1 L452.0 296.1 L452.0 293.1 L451.0 293.1 L451.0 295.6 L450.0 295.6 L450.0 295.9 L449.0 295.9 L449.0 293.2 L448.0 293.2 L448.0 296.3 L447.0 296.3 L447.0 295.9 L446.0 295.9 L446.0 295.7 L445.0 295.7 L445.0 296.1 L444.0 296.1 L444.0 293.3 L443.0 293.3 L443.0 296.3 L442.0 296.3 L442.0 295.9 L441.0 295.9 L441.0 293.2 L440.0 293.2 L440.0 296.4 L439.0 296.4 L439.0 295.7 L438.0 295.7 L438.0 295.5 L437.0 295.5 L437.0 295.7 L436.0 295.7 L436.0 293.3 L435.0 293.3 L435.0 295.4 L434.0 295.4 L434.0 296.0 L433.0 296.0 L433.0 293.2 L432.0 293.2 L432.0 295.5 L431.0 295.5 L431.0 295.5 L430.0 295.5 L430.0 295.5 L429.0 295.5 L429.0 296.0 L428.0 296.0 L428.0 293.2 L427.0 293.2 L427.0 295.8 L426.0 295.8 L426.0 296.3 L425.0 296.3 L425.0 295.5 L424.0 295.5 L424.0 293.3 L423.0 293.3 L423.0 295.5 L422.0 295.5 L422.0 295.4 L421.0 295.4 L421.0 296.3 L420.0 296.3 L420.0 293.3 L419.0 293.3 L419.0 295.5 L418.0 295.5 L418.0 296.0 L417.0 296.0 L417.0 295.8 L416.0 295.8 L416.0 293.2 L415.0 293.2 L415.0 295.5 L414.0 295.5 L414.0 296.0 L413.0 296.0 L413.0 296.2 L412.0 296.2 L412.0 293.2 L411.0 293.2 L411.0 295.6 L410.0 295.6 L410.0 295.2 L409.0 295.2 L409.0 293.2 L408.0 293.2 L408.0 296.4 L407.0 296.4 L407.0 296.4 L406.0 296.4 L406.0 295.9 L405.0 295.9 L405.0 293.0 L404.0 293.0 L404.0 295.2 L403.0 295.2 L403.0 295.5 L402.0 295.5 L402.0 293.1 L401.0 293.1 L401.0 296.1 L400.0 296.1 L400.0 295.5 L399.0 295.5 L399.0 295.2 L398.0 295.2 L398.0 293.3 L397.0 293.3 L397.0 296.1 L396.0 296.1 L396.0 295.4 L395.0 295.4 L395.0 295.6 L394.0 295.6 L394.0 296.3 L393.0 296.3 L393.0 293.1 L392.0 293.1 L392.0 296.3 L391.0 296.3 L391.0 295.8 L390.0 295.8 L390.0 296.4 L389.0 296.4 L389.0 293.1 L388.0 293.1 L388.0 295.5 L387.0 295.5 L387.0 295.5 L386.0 295.5 L386.0 295.8 L385.0 295.8 L385.0 293.0 L384.0 293.0 L384.0 296.0 L383.0 296.0 Z" fill="#b3fdfc"/>
<rect x="392.8" y="114" width="29.6" height="182" fill="#003030" fill-opacity="0.07"/>
<rect x="397.7" y="148.6" width="23" height="22.8" rx="3" fill="none" stroke="#e0ffff" stroke-opacity="0.22" stroke-width="1"/>
<rect x="397.7" y="180.5" width="23" height="22.8" rx="3" fill="none" stroke="#e0ffff" stroke-opacity="0.22" stroke-width="1"/>
<rect x="397.7" y="213" width="23" height="22.8" rx="3" fill="none" stroke="#e0ffff" stroke-opacity="0.22" stroke-width="1"/>
<rect x="397.7" y="244.8" width="23" height="22.8" rx="3" fill="none" stroke="#e0ffff" stroke-opacity="0.22" stroke-width="1"/>
<rect x="397.7" y="276.6" width="23" height="22.8" rx="3" fill="none" stroke="#e0ffff" stroke-opacity="0.22" stroke-width="1"/>
<path d="M403 291 L416 291" stroke="#000" stroke-opacity="0.0"/>
<path d="M400 299.3 Q400 300.5 402 300.5 L417 300.5 Q419 300.5 419 299.3" fill="none" stroke="#3a3a3a" stroke-width="1"/>
<path d="M409.2 224.6 L409.2 224.6" />
<path d="M403 192 L416 192 M409.5 185.5 L409.5 198.5" stroke="#e0ffff" stroke-opacity="0.25" stroke-width="1.2" />
<path d="M403 224.5 L416 224.5" stroke="#e0ffff" stroke-opacity="0.25" stroke-width="1.2" />
</svg>
<div class="t" style="left:-25.80px;width:400px;text-align:right;top:305.50px;font-size:13px;font-weight:400;color:#f0f0f0;letter-spacing:0.2px;-webkit-text-stroke:0.2px #e8e8e8;">0,0</div>
<div class="t" style="left:-25.80px;width:400px;text-align:right;top:285.83px;font-size:13px;font-weight:400;color:#f0f0f0;letter-spacing:0.2px;-webkit-text-stroke:0.2px #e8e8e8;">2,68</div>
<div class="t" style="left:-25.80px;width:400px;text-align:right;top:266.16px;font-size:13px;font-weight:400;color:#f0f0f0;letter-spacing:0.2px;-webkit-text-stroke:0.2px #e8e8e8;">5,36</div>
<div class="t" style="left:-25.80px;width:400px;text-align:right;top:246.49px;font-size:13px;font-weight:400;color:#f0f0f0;letter-spacing:0.2px;-webkit-text-stroke:0.2px #e8e8e8;">8,04</div>
<div class="t" style="left:-25.80px;width:400px;text-align:right;top:226.82px;font-size:13px;font-weight:400;color:#f0f0f0;letter-spacing:0.2px;-webkit-text-stroke:0.2px #e8e8e8;">10,72</div>
<div class="t" style="left:-25.80px;width:400px;text-align:right;top:207.15px;font-size:13px;font-weight:400;color:#f0f0f0;letter-spacing:0.2px;-webkit-text-stroke:0.2px #e8e8e8;">13,4</div>
<div class="t" style="left:-25.80px;width:400px;text-align:right;top:187.48px;font-size:13px;font-weight:400;color:#f0f0f0;letter-spacing:0.2px;-webkit-text-stroke:0.2px #e8e8e8;">16,08</div>
<div class="t" style="left:-25.80px;width:400px;text-align:right;top:167.81px;font-size:13px;font-weight:400;color:#f0f0f0;letter-spacing:0.2px;-webkit-text-stroke:0.2px #e8e8e8;">18,76</div>
<div class="t" style="left:-25.80px;width:400px;text-align:right;top:148.14px;font-size:13px;font-weight:400;color:#f0f0f0;letter-spacing:0.2px;-webkit-text-stroke:0.2px #e8e8e8;">21,44</div>
<div class="t" style="left:-25.80px;width:400px;text-align:right;top:128.47px;font-size:13px;font-weight:400;color:#f0f0f0;letter-spacing:0.2px;-webkit-text-stroke:0.2px #e8e8e8;">24,12</div>
<div class="t" style="left:-25.80px;width:400px;text-align:right;top:108.80px;font-size:13px;font-weight:400;color:#f0f0f0;letter-spacing:0.2px;-webkit-text-stroke:0.2px #e8e8e8;">26,8</div>
<div class="t" style="left:83.60px;width:600px;text-align:center;top:331.60px;font-size:13px;font-weight:400;color:#f0f0f0;letter-spacing:0.3px;-webkit-text-stroke:0.2px #e8e8e8;">0.00</div>
<div class="t" style="left:160.84px;width:600px;text-align:center;top:331.60px;font-size:13px;font-weight:400;color:#f0f0f0;letter-spacing:0.3px;-webkit-text-stroke:0.2px #e8e8e8;">0.20</div>
<div class="t" style="left:238.08px;width:600px;text-align:center;top:331.60px;font-size:13px;font-weight:400;color:#f0f0f0;letter-spacing:0.3px;-webkit-text-stroke:0.2px #e8e8e8;">0.40</div>
<div class="t" style="left:315.32px;width:600px;text-align:center;top:331.60px;font-size:13px;font-weight:400;color:#f0f0f0;letter-spacing:0.3px;-webkit-text-stroke:0.2px #e8e8e8;">0.60</div>
<div class="t" style="left:392.56px;width:600px;text-align:center;top:331.60px;font-size:13px;font-weight:400;color:#f0f0f0;letter-spacing:0.3px;-webkit-text-stroke:0.2px #e8e8e8;">0.80</div>
<div class="t" style="left:469.80px;width:600px;text-align:center;top:331.60px;font-size:13px;font-weight:400;color:#f0f0f0;letter-spacing:0.3px;-webkit-text-stroke:0.2px #e8e8e8;">1.00</div>
<div class="t" style="left:245.50px;width:600px;text-align:center;top:85.02px;font-size:12.5px;font-weight:400;color:#f0f0f0;letter-spacing:0.2px;-webkit-text-stroke:0.2px #e8e8e8;">Осциллограмма</div>
<div class="t" style="left:275.80px;width:600px;text-align:center;top:345.22px;font-size:12.5px;font-weight:400;color:#f0f0f0;letter-spacing:0.55px;-webkit-text-stroke:0.2px #e8e8e8;">Время [с]</div>
<div class="t" style="left:123.80px;top:203.75px;width:400px;text-align:center;font-size:12.5px;color:#f0f0f0;letter-spacing:0.62px;transform:rotate(-90deg);transform-origin:50% 50%;-webkit-text-stroke:0.2px #e8e8e8;">Освещенность [лк]</div>
<svg width="800" height="630" viewBox="0 0 800 630">
<line x1="441.30" y1="405" x2="441.30" y2="562" stroke="#5a5a5a" stroke-width="1.2"/>
<line x1="507.10" y1="405" x2="507.10" y2="562" stroke="#5a5a5a" stroke-width="1.2"/>
<line x1="572.90" y1="405" x2="572.90" y2="562" stroke="#5a5a5a" stroke-width="1.2"/>
<line x1="638.70" y1="405" x2="638.70" y2="562" stroke="#5a5a5a" stroke-width="1.2"/>
<line x1="704.50" y1="405" x2="704.50" y2="562" stroke="#5a5a5a" stroke-width="1.2"/>
<line x1="375.5" y1="435.92" x2="770.3" y2="435.92" stroke="#5a5a5a" stroke-width="1.2"/>
<line x1="375.5" y1="467.54" x2="770.3" y2="467.54" stroke="#5a5a5a" stroke-width="1.2"/>
<line x1="375.5" y1="499.16" x2="770.3" y2="499.16" stroke="#5a5a5a" stroke-width="1.2"/>
<line x1="375.5" y1="530.78" x2="770.3" y2="530.78" stroke="#5a5a5a" stroke-width="1.2"/>
<path d="M376.2 562 L376.2 522.4 L376.7 522.9 L377.2 523.2 L377.7 523.8 L378.2 523.4 L378.7 524.1 L379.2 521.6 L379.7 523.1 L380.2 524.7 L380.7 524.1 L381.2 525.1 L381.7 523.0 L382.2 524.3 L382.7 523.8 L383.2 525.0 L383.7 525.3 L384.2 523.9 L384.7 524.7 L385.2 525.0 L385.7 526.8 L386.2 526.2 L386.7 524.3 L387.2 526.1 L387.7 524.0 L388.2 525.3 L388.7 523.7 L389.2 523.2 L389.7 525.7 L390.2 523.7 L390.7 524.0 L391.2 526.5 L391.7 526.5 L392.2 525.0 L392.7 527.2 L393.2 526.2 L393.7 526.9 L394.2 525.7 L394.7 528.2 L395.2 527.7 L395.7 528.9 L396.2 529.0 L396.7 527.5 L397.2 528.1 L397.7 527.8 L398.2 527.7 L398.7 526.9 L399.2 527.1 L399.7 527.4 L400.2 525.0 L400.7 526.5 L401.2 524.9 L401.7 524.3 L402.2 523.8 L402.7 518.7 L403.2 514.0 L403.7 510.4 L404.2 507.0 L404.7 501.1 L405.2 499.8 L405.7 491.4 L406.2 485.5 L406.7 478.2 L407.2 468.6 L407.7 477.1 L408.2 483.7 L408.7 494.7 L409.2 500.0 L409.7 501.9 L410.2 504.1 L410.7 508.3 L411.2 507.2 L411.7 509.2 L412.2 510.1 L412.7 510.5 L413.2 509.0 L413.7 509.4 L414.2 510.2 L414.7 511.4 L415.2 509.7 L415.7 512.0 L416.2 512.5 L416.7 513.1 L417.2 511.0 L417.7 514.1 L418.2 511.7 L418.7 512.3 L419.2 513.0 L419.7 513.8 L420.2 512.0 L420.7 513.6 L421.2 512.3 L421.7 511.5 L422.2 511.7 L422.7 511.8 L423.2 512.1 L423.7 512.9 L424.2 515.0 L424.7 516.5 L425.2 514.6 L425.7 514.8 L426.2 518.2 L426.7 517.4 L427.2 517.2 L427.7 516.5 L428.2 517.4 L428.7 517.9 L429.2 516.6 L429.7 516.3 L430.2 515.0 L430.7 517.4 L431.2 514.5 L431.7 515.6 L432.2 516.3 L432.7 513.9 L433.2 515.4 L433.7 515.7 L434.2 514.5 L434.7 513.9 L435.2 510.6 L435.7 510.3 L436.2 508.2 L436.7 509.0 L437.2 500.5 L437.7 494.0 L438.2 484.8 L438.7 473.9 L439.2 488.6 L439.7 500.1 L440.2 509.0 L440.7 512.2 L441.2 513.9 L441.7 514.7 L442.2 515.5 L442.7 515.3 L443.2 516.5 L443.7 518.9 L444.2 519.3 L444.7 518.8 L445.2 519.0 L445.7 519.0 L446.2 518.8 L446.7 519.5 L447.2 521.2 L447.7 521.6 L448.2 520.3 L448.7 521.7 L449.2 521.8 L449.7 521.8 L450.2 521.8 L450.7 522.3 L451.2 521.3 L451.7 522.5 L452.2 521.4 L452.7 522.2 L453.2 523.2 L453.7 523.1 L454.2 522.0 L454.7 524.0 L455.2 523.2 L455.7 523.1 L456.2 521.5 L456.7 523.2 L457.2 522.4 L457.7 523.8 L458.2 523.3 L458.7 524.4 L459.2 524.0 L459.7 524.6 L460.2 523.3 L460.7 524.3 L461.2 524.7 L461.7 525.1 L462.2 523.7 L462.7 525.3 L463.2 525.5 L463.7 525.1 L464.2 526.0 L464.7 526.1 L465.2 524.9 L465.7 525.2 L466.2 524.4 L466.7 526.7 L467.2 527.2 L467.7 526.1 L468.2 527.1 L468.7 527.4 L469.2 527.7 L469.7 526.3 L470.2 527.5 L470.7 527.7 L471.2 527.8 L471.7 527.9 L472.2 528.0 L472.7 528.2 L473.2 528.3 L473.7 528.4 L474.2 528.5 L474.7 528.7 L475.2 528.8 L475.7 528.9 L476.2 529.0 L476.7 529.2 L477.2 529.3 L477.7 529.4 L478.2 529.5 L478.7 529.7 L479.2 529.8 L479.7 529.9 L480.2 530.0 L480.7 530.1 L481.2 530.1 L481.7 530.2 L482.2 530.2 L482.7 530.3 L483.2 530.3 L483.7 530.4 L484.2 530.4 L484.7 530.5 L485.2 530.5 L485.7 530.6 L486.2 530.6 L486.7 530.7 L487.2 530.7 L487.7 530.8 L488.2 530.8 L488.7 530.9 L489.2 530.9 L489.7 531.0 L490.2 531.0 L490.7 531.1 L491.2 531.1 L491.7 531.2 L492.2 531.2 L492.7 531.3 L493.2 531.3 L493.7 531.4 L494.2 531.4 L494.7 531.5 L495.2 531.5 L495.7 531.6 L496.2 531.6 L496.7 531.7 L497.2 531.7 L497.7 531.8 L498.2 531.8 L498.7 531.9 L499.2 531.9 L499.7 532.0 L500.2 532.0 L500.7 532.1 L501.2 532.1 L501.7 532.1 L502.2 532.2 L502.7 532.2 L503.2 532.3 L503.7 532.3 L504.2 532.4 L504.7 532.4 L505.2 532.4 L505.7 532.5 L506.2 532.5 L506.7 532.6 L507.2 532.6 L507.7 532.6 L508.2 532.7 L508.7 532.7 L509.2 532.8 L509.7 532.8 L510.2 532.9 L510.7 532.9 L511.2 532.9 L511.7 533.0 L512.2 533.0 L512.7 533.1 L513.2 533.1 L513.7 533.1 L514.2 533.2 L514.7 533.2 L515.2 533.3 L515.7 533.3 L516.2 533.4 L516.7 533.4 L517.2 533.4 L517.7 533.5 L518.2 533.5 L518.7 533.6 L519.2 533.6 L519.7 533.6 L520.2 533.7 L520.7 533.7 L521.2 533.8 L521.7 533.8 L522.2 533.9 L522.7 533.9 L523.2 533.9 L523.7 534.0 L524.2 534.0 L524.7 534.1 L525.2 534.1 L525.7 534.1 L526.2 534.2 L526.7 534.2 L527.2 534.3 L527.7 534.3 L528.2 534.4 L528.7 534.4 L529.2 534.4 L529.7 534.5 L530.2 534.5 L530.7 534.5 L531.2 534.6 L531.7 534.6 L532.2 534.6 L532.7 534.7 L533.2 534.7 L533.7 534.7 L534.2 534.8 L534.7 534.8 L535.2 534.8 L535.7 534.9 L536.2 534.9 L536.7 534.9 L537.2 535.0 L537.7 535.0 L538.2 535.0 L538.7 535.0 L539.2 535.1 L539.7 535.1 L540.2 535.1 L540.7 535.2 L541.2 535.2 L541.7 535.2 L542.2 535.3 L542.7 535.3 L543.2 535.3 L543.7 535.4 L544.2 535.4 L544.7 535.4 L545.2 535.5 L545.7 535.5 L546.2 535.5 L546.7 535.5 L547.2 535.6 L547.7 535.6 L548.2 535.6 L548.7 535.7 L549.2 535.7 L549.7 535.7 L550.2 535.8 L550.7 535.8 L551.2 535.8 L551.7 535.9 L552.2 535.9 L552.7 535.9 L553.2 536.0 L553.7 536.0 L554.2 536.0 L554.7 536.0 L555.2 536.1 L555.7 536.1 L556.2 536.1 L556.7 536.2 L557.2 536.2 L557.7 536.2 L558.2 536.3 L558.7 536.3 L559.2 536.3 L559.7 536.4 L560.2 536.4 L560.7 536.4 L561.2 536.5 L561.7 536.5 L562.2 536.5 L562.7 536.5 L563.2 536.6 L563.7 536.6 L564.2 536.6 L564.7 536.7 L565.2 536.7 L565.7 536.7 L566.2 536.8 L566.7 536.8 L567.2 536.8 L567.7 536.9 L568.2 536.9 L568.7 536.9 L569.2 537.0 L569.7 537.0 L570.2 537.0 L570.7 537.1 L571.2 537.1 L571.7 537.1 L572.2 537.2 L572.7 537.2 L573.2 537.3 L573.7 537.3 L574.2 537.4 L574.7 537.4 L575.2 537.4 L575.7 537.5 L576.2 537.5 L576.7 537.6 L577.2 537.6 L577.7 537.6 L578.2 537.7 L578.7 537.7 L579.2 537.8 L579.7 537.8 L580.2 537.9 L580.7 537.9 L581.2 537.9 L581.7 538.0 L582.2 538.0 L582.7 538.1 L583.2 538.1 L583.7 538.1 L584.2 538.2 L584.7 538.2 L585.2 538.3 L585.7 538.3 L586.2 538.4 L586.7 538.4 L587.2 538.4 L587.7 538.5 L588.2 538.5 L588.7 538.6 L589.2 538.6 L589.7 538.6 L590.2 538.7 L590.7 538.7 L591.2 538.8 L591.7 538.8 L592.2 538.9 L592.7 538.9 L593.2 538.9 L593.7 539.0 L594.2 539.0 L594.7 539.1 L595.2 539.1 L595.7 539.1 L596.2 539.2 L596.7 539.2 L597.2 539.3 L597.7 539.3 L598.2 539.4 L598.7 539.4 L599.2 539.4 L599.7 539.5 L600.2 539.5 L600.7 539.6 L601.2 539.6 L601.7 539.6 L602.2 539.7 L602.7 539.7 L603.2 539.8 L603.7 539.8 L604.2 539.9 L604.7 539.9 L605.2 539.9 L605.7 540.0 L606.2 540.0 L606.7 540.1 L607.2 540.1 L607.7 540.1 L608.2 540.2 L608.7 540.2 L609.2 540.3 L609.7 540.3 L610.2 540.4 L610.7 540.4 L611.2 540.4 L611.7 540.5 L612.2 540.5 L612.7 540.6 L613.2 540.6 L613.7 540.6 L614.2 540.7 L614.7 540.7 L615.2 540.8 L615.7 540.8 L616.2 540.9 L616.7 540.9 L617.2 540.9 L617.7 541.0 L618.2 541.0 L618.7 541.1 L619.2 541.1 L619.7 541.1 L620.2 541.2 L620.7 541.2 L621.2 541.3 L621.7 541.3 L622.2 541.4 L622.7 541.4 L623.2 541.4 L623.7 541.5 L624.2 541.5 L624.7 541.6 L625.2 541.6 L625.7 541.6 L626.2 541.7 L626.7 541.7 L627.2 541.8 L627.7 541.8 L628.2 541.9 L628.7 541.9 L629.2 541.9 L629.7 542.0 L630.2 542.0 L630.7 542.0 L631.2 542.0 L631.7 542.1 L632.2 542.1 L632.7 542.1 L633.2 542.1 L633.7 542.1 L634.2 542.1 L634.7 542.2 L635.2 542.2 L635.7 542.2 L636.2 542.2 L636.7 542.2 L637.2 542.2 L637.7 542.3 L638.2 542.3 L638.7 542.3 L639.2 542.3 L639.7 542.3 L640.2 542.3 L640.7 542.4 L641.2 542.4 L641.7 542.4 L642.2 542.4 L642.7 542.4 L643.2 542.4 L643.7 542.5 L644.2 542.5 L644.7 542.5 L645.2 542.5 L645.7 542.5 L646.2 542.5 L646.7 542.6 L647.2 542.6 L647.7 542.6 L648.2 542.6 L648.7 542.6 L649.2 542.6 L649.7 542.7 L650.2 542.7 L650.7 542.7 L651.2 542.7 L651.7 542.7 L652.2 542.7 L652.7 542.8 L653.2 542.8 L653.7 542.8 L654.2 542.8 L654.7 542.8 L655.2 542.8 L655.7 542.9 L656.2 542.9 L656.7 542.9 L657.2 542.9 L657.7 542.9 L658.2 542.9 L658.7 543.0 L659.2 543.0 L659.7 543.0 L660.2 543.0 L660.7 543.0 L661.2 543.0 L661.7 543.0 L662.2 543.0 L662.7 543.0 L663.2 543.1 L663.7 543.1 L664.2 543.1 L664.7 543.1 L665.2 543.1 L665.7 543.1 L666.2 543.1 L666.7 543.1 L667.2 543.1 L667.7 543.1 L668.2 543.1 L668.7 543.2 L669.2 543.2 L669.7 543.2 L670.2 543.2 L670.7 543.2 L671.2 543.2 L671.7 543.2 L672.2 543.2 L672.7 543.2 L673.2 543.2 L673.7 543.2 L674.2 543.2 L674.7 543.3 L675.2 543.3 L675.7 543.3 L676.2 543.3 L676.7 543.3 L677.2 543.3 L677.7 543.3 L678.2 543.3 L678.7 543.3 L679.2 543.3 L679.7 543.3 L680.2 543.4 L680.7 543.4 L681.2 543.4 L681.7 543.4 L682.2 543.4 L682.7 543.4 L683.2 543.4 L683.7 543.4 L684.2 543.4 L684.7 543.4 L685.2 543.4 L685.7 543.4 L686.2 543.5 L686.7 543.5 L687.2 543.5 L687.7 543.5 L688.2 543.5 L688.7 543.5 L689.2 543.5 L689.7 543.5 L690.2 543.5 L690.7 543.5 L691.2 543.5 L691.7 543.6 L692.2 543.6 L692.7 543.6 L693.2 543.6 L693.7 543.6 L694.2 543.6 L694.7 543.6 L695.2 543.6 L695.7 543.6 L696.2 543.6 L696.7 543.6 L697.2 543.7 L697.7 543.7 L698.2 543.7 L698.7 543.7 L699.2 543.7 L699.7 543.7 L700.2 543.7 L700.7 543.7 L701.2 543.7 L701.7 543.7 L702.2 543.7 L702.7 543.7 L703.2 543.7 L703.7 543.7 L704.2 543.7 L704.7 543.7 L705.2 543.7 L705.7 543.7 L706.2 543.8 L706.7 543.8 L707.2 543.8 L707.7 543.8 L708.2 543.8 L708.7 543.8 L709.2 543.8 L709.7 543.8 L710.2 543.8 L710.7 543.8 L711.2 543.8 L711.7 543.8 L712.2 543.8 L712.7 543.8 L713.2 543.8 L713.7 543.8 L714.2 543.8 L714.7 543.8 L715.2 543.8 L715.7 543.8 L716.2 543.8 L716.7 543.8 L717.2 543.8 L717.7 543.9 L718.2 543.9 L718.7 543.9 L719.2 543.9 L719.7 543.9 L720.2 543.9 L720.7 543.9 L721.2 543.9 L721.7 543.9 L722.2 543.9 L722.7 543.9 L723.2 543.9 L723.7 543.9 L724.2 543.9 L724.7 543.9 L725.2 543.9 L725.7 543.9 L726.2 543.9 L726.7 543.9 L727.2 543.9 L727.7 543.9 L728.2 543.9 L728.7 543.9 L729.2 544.0 L729.7 544.0 L730.2 544.0 L730.7 544.0 L731.2 544.0 L731.7 544.0 L732.2 544.0 L732.7 544.0 L733.2 544.0 L733.7 544.0 L734.2 544.0 L734.7 544.0 L735.2 544.0 L735.7 544.0 L736.2 544.0 L736.7 544.0 L737.2 544.0 L737.7 544.0 L738.2 544.0 L738.7 544.0 L739.2 544.0 L739.7 544.0 L740.2 544.0 L740.7 544.1 L741.2 544.1 L741.7 544.1 L742.2 544.1 L742.7 544.1 L743.2 544.1 L743.7 544.1 L744.2 544.1 L744.7 544.1 L745.2 544.1 L745.7 544.1 L746.2 544.1 L746.7 544.1 L747.2 544.1 L747.7 544.1 L748.2 544.1 L748.7 544.1 L749.2 544.1 L749.7 544.1 L750.2 544.1 L750.7 544.1 L751.2 544.1 L751.7 544.1 L752.2 544.2 L752.7 544.2 L753.2 544.2 L753.7 544.2 L754.2 544.2 L754.7 544.2 L755.2 544.2 L755.7 544.2 L756.2 544.2 L756.7 544.2 L757.2 544.2 L757.7 544.2 L758.2 544.2 L758.7 544.2 L759.2 544.2 L759.7 544.2 L760.2 544.2 L760.7 544.2 L761.2 544.2 L761.7 544.2 L762.2 544.2 L762.7 544.2 L763.2 544.2 L763.7 544.2 L764.2 544.3 L764.7 544.3 L765.2 544.3 L765.7 544.3 L766.2 544.3 L766.7 544.3 L767.2 544.3 L767.7 544.3 L768.2 544.3 L768.7 544.3 L769.2 544.3 L769.5 562 Z" fill="#b3fdfc"/>
<line x1="382.00" y1="526.3" x2="382.00" y2="486.4" stroke="#90dcdc" stroke-width="1.3"/>
<line x1="388.20" y1="526.9" x2="388.20" y2="507.9" stroke="#90dcdc" stroke-width="1.3"/>
<line x1="391.20" y1="527.1" x2="391.20" y2="465" stroke="#90dcdc" stroke-width="1.3"/>
<line x1="395.30" y1="529.2" x2="395.30" y2="512.6" stroke="#90dcdc" stroke-width="1.3"/>
<line x1="400.60" y1="528.1" x2="400.60" y2="498.3" stroke="#90dcdc" stroke-width="1.3"/>
<line x1="407.20" y1="472.0" x2="407.20" y2="424.5" stroke="#90dcdc" stroke-width="1.3"/>
<line x1="414.40" y1="512.3" x2="414.40" y2="498.3" stroke="#90dcdc" stroke-width="1.3"/>
<line x1="422.90" y1="515.0" x2="422.90" y2="466.4" stroke="#90dcdc" stroke-width="1.3"/>
<line x1="431.90" y1="517.5" x2="431.90" y2="510.5" stroke="#90dcdc" stroke-width="1.3"/>
<line x1="438.60" y1="472.0" x2="438.60" y2="447.4" stroke="#90dcdc" stroke-width="1.3"/>
<line x1="453.80" y1="524.5" x2="453.80" y2="500.2" stroke="#90dcdc" stroke-width="1.3"/>
<line x1="470.00" y1="529.5" x2="470.00" y2="518.5" stroke="#90dcdc" stroke-width="1.3"/>
<line x1="502.00" y1="534.2" x2="502.00" y2="528.5" stroke="#90dcdc" stroke-width="1.3"/>
<rect x="385.5" y="519" width="31.3" height="43" fill="#003030" fill-opacity="0.09"/>
<rect x="391" y="419.4" width="23" height="23" rx="3" fill="none" stroke="#a0a0a0" stroke-opacity="0.16" stroke-width="1"/>
<rect x="391" y="451.5" width="23" height="23" rx="3" fill="none" stroke="#a0a0a0" stroke-opacity="0.16" stroke-width="1"/>
<rect x="391" y="484" width="23" height="23" rx="3" fill="none" stroke="#a0a0a0" stroke-opacity="0.16" stroke-width="1"/>
<rect x="391" y="516" width="23" height="23" rx="3" fill="none" stroke="#a0a0a0" stroke-opacity="0.16" stroke-width="1"/>
<rect x="391" y="547" width="23" height="23" rx="3" fill="none" stroke="#a0a0a0" stroke-opacity="0.16" stroke-width="1"/>
<path d="M395 430 L398 436 L404 424" fill="none" stroke="#a0a0a0" stroke-opacity="0.25" stroke-width="1.2"/>
</svg>
<div class="t" style="left:-33.40px;width:400px;text-align:right;top:398.70px;font-size:13px;font-weight:400;color:#f0f0f0;letter-spacing:0.2px;-webkit-text-stroke:0.2px #e8e8e8;">0</div>
<div class="t" style="left:-33.40px;width:400px;text-align:right;top:430.32px;font-size:13px;font-weight:400;color:#f0f0f0;letter-spacing:0.2px;-webkit-text-stroke:0.2px #e8e8e8;">-20</div>
<div class="t" style="left:-33.40px;width:400px;text-align:right;top:461.94px;font-size:13px;font-weight:400;color:#f0f0f0;letter-spacing:0.2px;-webkit-text-stroke:0.2px #e8e8e8;">-40</div>
<div class="t" style="left:-33.40px;width:400px;text-align:right;top:493.56px;font-size:13px;font-weight:400;color:#f0f0f0;letter-spacing:0.2px;-webkit-text-stroke:0.2px #e8e8e8;">-60</div>
<div class="t" style="left:-33.40px;width:400px;text-align:right;top:525.18px;font-size:13px;font-weight:400;color:#f0f0f0;letter-spacing:0.2px;-webkit-text-stroke:0.2px #e8e8e8;">-80</div>
<div class="t" style="left:-33.40px;width:400px;text-align:right;top:556.80px;font-size:13px;font-weight:400;color:#f0f0f0;letter-spacing:0.2px;-webkit-text-stroke:0.2px #e8e8e8;">-100</div>
<div class="t" style="left:75.50px;width:600px;text-align:center;top:571.90px;font-size:13px;font-weight:400;color:#f0f0f0;letter-spacing:0.2px;-webkit-text-stroke:0.2px #e8e8e8;">0</div>
<div class="t" style="left:142.60px;width:600px;text-align:center;top:571.90px;font-size:13px;font-weight:400;color:#f0f0f0;letter-spacing:0.2px;-webkit-text-stroke:0.2px #e8e8e8;">500</div>
<div class="t" style="left:208.40px;width:600px;text-align:center;top:571.90px;font-size:13px;font-weight:400;color:#f0f0f0;letter-spacing:0.2px;-webkit-text-stroke:0.2px #e8e8e8;">1000</div>
<div class="t" style="left:274.20px;width:600px;text-align:center;top:571.90px;font-size:13px;font-weight:400;color:#f0f0f0;letter-spacing:0.2px;-webkit-text-stroke:0.2px #e8e8e8;">1500</div>
<div class="t" style="left:340.00px;width:600px;text-align:center;top:571.90px;font-size:13px;font-weight:400;color:#f0f0f0;letter-spacing:0.2px;-webkit-text-stroke:0.2px #e8e8e8;">2000</div>
<div class="t" style="left:405.80px;width:600px;text-align:center;top:571.90px;font-size:13px;font-weight:400;color:#f0f0f0;letter-spacing:0.2px;-webkit-text-stroke:0.2px #e8e8e8;">2500</div>
<div class="t" style="left:471.60px;width:600px;text-align:center;top:571.90px;font-size:13px;font-weight:400;color:#f0f0f0;letter-spacing:0.2px;-webkit-text-stroke:0.2px #e8e8e8;">3000</div>
<div class="t" style="left:245.75px;width:600px;text-align:center;top:387.22px;font-size:12.5px;font-weight:400;color:#f0f0f0;letter-spacing:0.3px;-webkit-text-stroke:0.2px #e8e8e8;">Спектр</div>
<div class="t" style="left:272.80px;width:600px;text-align:center;top:585.42px;font-size:12.5px;font-weight:400;color:#f0f0f0;letter-spacing:0.6px;-webkit-text-stroke:0.2px #e8e8e8;">Частота [Гц]</div>
<div class="t" style="left:126.50px;top:476.55px;width:400px;text-align:center;font-size:12.5px;color:#f0f0f0;letter-spacing:0.55px;transform:rotate(-90deg);transform-origin:50% 50%;-webkit-text-stroke:0.2px #e8e8e8;">Амплитуда [дБ]</div>
</body></html>
